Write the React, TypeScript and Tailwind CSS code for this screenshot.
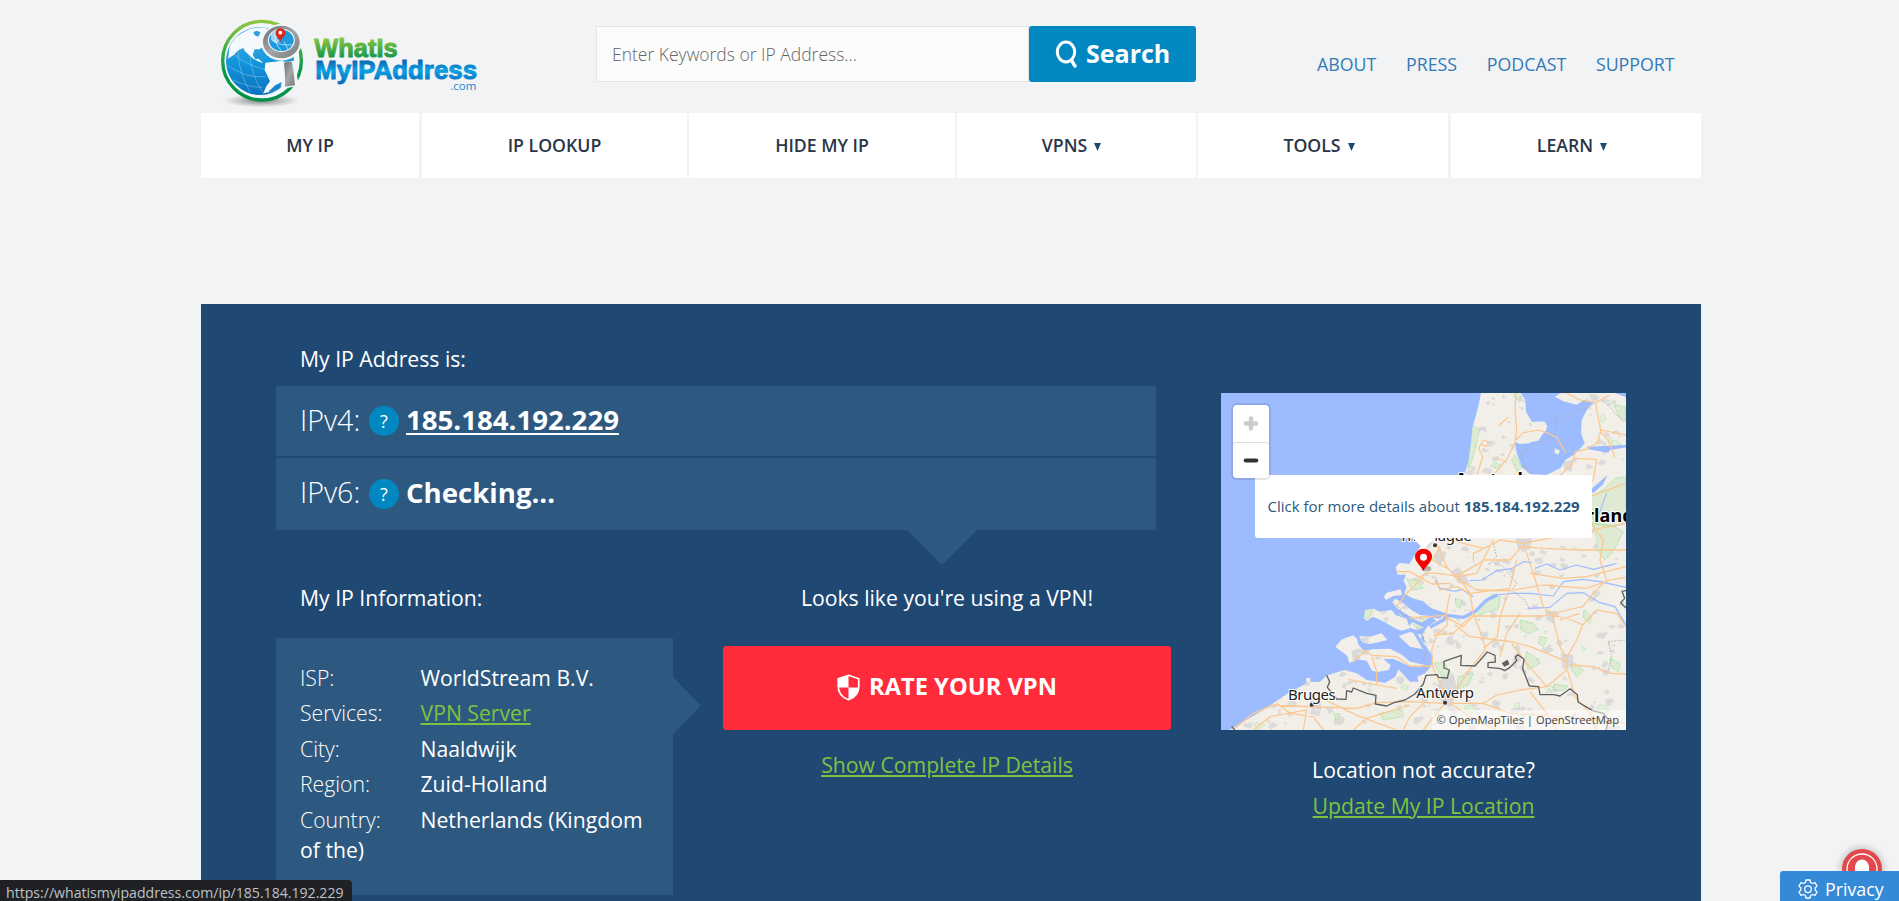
import React from "react";

const NAV = [
  { label: "MY IP", cls: "w-[218px] mr-[3px]" },
  { label: "IP LOOKUP", cls: "w-[265px] mr-[2px]" },
  { label: "HIDE MY IP", cls: "w-[266px] mr-[2px]" },
  { label: "VPNS", cls: "w-[239px] mr-[2px] pr-[10px]", menu: true },
  { label: "TOOLS", cls: "w-[250px] mr-[3px] pr-[8px]", menu: true },
  { label: "LEARN", cls: "w-[250px] pr-[8px]", menu: true },
];

const INFO = [
  { k: "ISP:", v: "WorldStream B.V." },
  { k: "Services:", v: "VPN Server", link: true },
  { k: "City:", v: "Naaldwijk" },
  { k: "Region:", v: "Zuid-Holland" },
  { k: "Country:", v: "Netherlands (Kingdom of the)" },
];

function Logo() {
  return (
    <svg className="h-[93px] w-[260px] shrink-0" viewBox="60 51 780 279">
      <defs>
        <linearGradient id="ring" x1="0" y1="0" x2="0" y2="1">
          <stop offset="0" stopColor="#8cc63f" />
          <stop offset="0.6" stopColor="#0a9a48" />
          <stop offset="1" stopColor="#009245" />
        </linearGradient>
        <linearGradient id="sea" x1="0" y1="0" x2="0" y2="1">
          <stop offset="0" stopColor="#5db4ea" />
          <stop offset="0.5" stopColor="#1397dd" />
          <stop offset="1" stopColor="#0a72bd" />
        </linearGradient>
        <linearGradient id="gtext" x1="0" y1="0" x2="0" y2="1">
          <stop offset="0.15" stopColor="#8cc63f" />
          <stop offset="0.85" stopColor="#0f9347" />
        </linearGradient>
        <linearGradient id="btext" x1="0" y1="0" x2="0" y2="1">
          <stop offset="0.15" stopColor="#0c62b0" />
          <stop offset="0.5" stopColor="#0aa0e4" />
          <stop offset="0.9" stopColor="#0a6fbf" />
        </linearGradient>
        <linearGradient id="steel" x1="0" y1="0" x2="1" y2="1">
          <stop offset="0" stopColor="#6c6e70" />
          <stop offset="0.5" stopColor="#a5a6a8" />
          <stop offset="1" stopColor="#77797b" />
        </linearGradient>
        <radialGradient id="shade">
          <stop offset="0" stopColor="#555" stopOpacity="0.75" />
          <stop offset="1" stopColor="#777" stopOpacity="0" />
        </radialGradient>
        <clipPath id="globe"><circle cx="180" cy="183" r="101" /></clipPath>
        <clipPath id="lens"><ellipse cx="244" cy="121" rx="37" ry="32" /></clipPath>
      </defs>
      <ellipse cx="184" cy="302" rx="115" ry="20" fill="url(#shade)" />
      <circle cx="186" cy="182" r="118" fill="#f3f7fa" stroke="url(#ring)" strokeWidth="10" />
      <circle cx="180" cy="183" r="102" fill="url(#sea)" />
      <g clipPath="url(#globe)">
        <path d="M90 130 L110 108 L150 86 L200 80 L200 108 L190 140 L178 148 L164 148 L158 164 L166 178 L176 176 L190 190 L174 184 L160 176 L146 164 L134 152 L130 144 L116 150 L100 166 L84 176 Z" fill="#f6f9fb" />
        <path d="M160 96 L172 92 L182 98 L174 110 L164 106 Z M166 152 L180 156 L186 166 L174 162 Z" fill="#2f9fe0" />
        <path d="M196 188 L250 182 L252 284 L210 276 L190 280 L198 260 L210 244 L194 210 Z" fill="#f6f9fb" />
        <path d="M206 274 L226 256 L245 246 L240 270 L214 282 Z" fill="#1b86d0" />
        <g fill="none" stroke="#cfe8f8" strokeWidth="1.5" opacity="0.7">
          <path d="M82 196 Q140 236 196 230 M100 240 Q140 262 188 262 M120 110 Q100 190 150 276 M150 160 Q150 220 190 280" />
          <path d="M92 150 Q120 190 200 210" />
        </g>
      </g>
      <ellipse cx="244" cy="127" rx="61" ry="55" fill="#f3f7fa" />
      <ellipse cx="244" cy="126" rx="55" ry="49" fill="url(#steel)" />
      <ellipse cx="244" cy="121" rx="40" ry="35" fill="#fff" />
      <ellipse cx="244" cy="121" rx="37" ry="32" fill="#1b9ae0" />
      <g clipPath="url(#lens)">
        <path d="M212 100 L228 92 L238 102 L230 114 L240 124 L226 130 L214 120 Z" fill="#9fd3f3" />
        <path d="M214 118 Q240 140 280 134 M224 94 Q222 130 244 152 M252 124 Q262 140 264 152" fill="none" stroke="#e6f4fc" strokeWidth="2" />
      </g>
      <path d="M241 126 C237 112 226 110 227 99 A14.500 14.500 0 0 1 256 99 C256 110 245 112 241 126 Z" fill="#d8291c" />
      <circle cx="241" cy="98" r="5.500" fill="#fff" />
      <path d="M246 186 L284 182 L296 258 L246 266 Z" fill="#f3f7fa" />
      <path d="M252 190 Q264 180 276 186 Q282 220 285 256 L255 260 Q256 220 252 190 Z" fill="url(#steel)" />
      <text x="343" y="172" fill="url(#gtext)" stroke="url(#gtext)" strokeWidth="3" strokeLinejoin="round" textLength="250" lengthAdjust="spacingAndGlyphs" className="font-['Liberation_Sans',sans-serif] text-[78px] font-bold">WhatIs</text>
      <text x="346" y="238" fill="url(#btext)" stroke="url(#btext)" strokeWidth="3" strokeLinejoin="round" textLength="485" lengthAdjust="spacingAndGlyphs" className="font-['Liberation_Sans',sans-serif] text-[78px] font-bold">MyIPAddress</text>
      <text x="751" y="269" fill="#1a86cc" textLength="78" lengthAdjust="spacingAndGlyphs" className="font-['Open_Sans',sans-serif] text-[35px]">.com</text>
    </svg>
  );
}

function patches(count: number, seed: number, size: number) {
  let s = seed;
  const rnd = () => {
    s = (s * 1103515245 + 12345) % 2147483648;
    return s / 2147483648;
  };
  const out: string[] = [];
  for (let i = 0; i < count; i++) {
    const x = 40 + rnd() * 1200;
    const y = 45 + rnd() * 1000;
    const n = 7;
    const r = size * (0.4 + rnd());
    let d = "";
    for (let j = 0; j < n; j++) {
      const a = (j / n) * Math.PI * 2;
      const q = r * (0.4 + rnd() * 0.9);
      d += `${j ? "L" : "M"}${(x + Math.cos(a) * q).toFixed(1)} ${(y + Math.sin(a) * q * 0.8).toFixed(1)}`;
    }
    out.push(d + "Z");
  }
  return out.join("");
}

const LAND =
  "M813 39 L806 75 L798 105 L788 140 L782 200 L774 250 L760 290 L735 350 L700 410 L655 465 L620 515 L598 552 L568 549 L557 562 L563 584 L588 584 L581 602 L590 622 L583 640 L606 655 L640 664 L668 690 L705 700 L690 716 L660 712 L630 730 L650 742 L632 775 L645 795 L668 828 L664 858 L645 880 L622 890 L625 905 L600 905 L565 868 L556 890 L525 908 L470 900 L440 880 L404 870 L352 886 L330 905 L302 906 L300 893 L288 895 L290 910 L230 942 L160 990 L75 1040 L58 1050 L1248 1050 L1248 39 Z" +
  "M522 650 L530 638 L572 628 L576 645 L550 648 L528 660 Z" +
  "M460 715 L466 690 L490 686 L510 695 L545 690 L556 705 L590 716 L600 745 L575 752 L556 745 L540 736 L516 722 L490 710 L470 722 Z" +
  "M545 668 L556 656 L584 672 L604 690 L630 705 L660 708 L680 722 L655 738 L618 750 L596 742 L612 718 L570 706 L562 692 Z" +
  "M376 800 L396 778 L430 766 L440 775 L446 796 L462 812 L490 808 L540 806 L575 824 L600 845 L645 855 L625 862 L590 855 L550 836 L520 838 L542 855 L536 870 L502 876 L486 872 L470 842 L440 838 L418 850 L412 828 Z" +
  "M448 768 L480 770 L515 760 L532 780 L500 788 L476 792 L456 786 Z" +
  "M566 768 L600 756 L640 765 L644 785 L640 808 L600 800 Z";

const INLAND_WATER =
  "M932 39 L946 60 L948 95 L965 125 L1000 125 L1010 150 L985 170 L958 190 L930 192 L915 186 L920 220 L936 262 L960 282 L1010 285 L1052 264 L1066 240 L1090 225 L1112 205 L1124 190 L1113 160 L1115 120 L1135 82 L1152 70 L1122 60 L1100 74 L1060 64 L1034 50 L1052 39 Z" +
  "M1130 200 L1248 195 L1248 202 L1200 210 L1195 218 L1135 208 Z M1140 330 L1192 286 L1180 312 L1150 340 Z M1215 39 L1248 39 L1248 52 Z";

const GREEN =
  "M788 136 L808 150 L800 190 L786 240 L774 268 L780 200 Z M905 240 L915 226 L935 262 L922 275 Z M842 258 L855 246 L872 256 L860 266 Z M1140 350 L1180 330 L1215 295 L1248 290 L1248 430 L1210 440 L1150 430 Z M1146 430 L1215 440 L1240 455 L1210 515 L1185 540 L1162 510 L1160 475 Z M1212 75 L1245 80 L1248 125 L1228 112 Z M820 665 L845 645 L872 650 L864 690 L830 696 L800 710 Z M930 720 L970 730 L985 748 L955 762 L932 748 Z M1122 690 L1145 710 L1138 730 L1118 712 Z M950 815 L972 830 L990 850 L955 868 L945 845 Z M735 655 L755 660 L750 686 L738 675 Z M990 770 L1012 775 L1000 800 L985 788 Z M1090 846 L1120 870 L1100 890 L1082 868 Z M1200 835 L1230 850 L1225 875 L1204 862 Z M672 850 L700 845 L722 880 L695 890 Z M745 890 L790 880 L775 915 L740 930 Z M1034 912 L1075 918 L1060 932 L1030 928 Z M510 1000 L575 988 L580 1010 L520 1020 Z M372 1000 L390 1002 L378 1025 Z M462 690 L490 685 L480 712 L462 718 Z M600 720 L640 735 L625 750 Z M1030 205 L1048 210 L1042 224 Z M590 596 L620 602 L640 625 L606 630 Z";

const ROADS =
  "M918 39 L915 90 L920 150 L916 185 L892 235 L862 272 L845 290 M800 290 L818 230 L806 205 L820 180 L836 186 L828 200 L812 192 M918 180 L940 158 L985 150 L1010 158 L1040 172 L1068 220 M1070 39 L1110 60 L1156 68 L1172 150 L1165 185 L1130 208 L1096 215 L1088 250 L1055 282 L1020 310 M1156 68 L1200 45 M1172 155 L1195 182 L1215 232 M1172 150 L1248 165 M1095 235 L1160 238 L1150 300 L1120 320 M1140 350 L1248 310" +
  "M680 490 L710 560 L735 590 L790 560 L822 540 L900 540 L935 500 L1000 505 L1110 510 L1248 510 M700 470 L760 490 L822 505 L870 480 L940 490 L1248 430 M822 505 L790 520 L790 545 M850 480 L800 580 L745 590 L700 582 L650 578 L630 592 L600 575 L560 575 M940 490 L970 580 L1000 680 L1026 705 L1050 800 L1072 840 M920 540 L900 620 L870 712 L862 770 L825 802 M745 590 L780 640 L790 700 L820 780 L825 810 L770 880 L720 960 M740 595 L800 630 L900 632 L1000 615 L1130 625 L1200 600 L1248 592 M680 600 L690 630 L740 620 L780 640 L900 625 M720 640 L708 700 L712 735 L680 765 L665 810 L668 860 L700 930 L708 960 M630 592 L665 612 L720 610 M640 590 L585 645 L560 680 M600 714 L708 706 M708 712 L760 740 L790 708 L1000 708 L1072 690 L1118 680 L1150 640 L1190 600 L1170 540 L1180 480 L1145 430 M670 765 L730 760 L790 700 M735 735 L780 770 L862 780 L905 785 L960 800 L1072 845 L1070 870 L1010 920 L930 930 L860 945 L820 970 L720 970 M1072 830 L1100 780 L1118 735 L1085 720 L1026 705 M1080 855 L1150 860 L1200 880 L1248 882 M1072 870 L1095 950 L1140 1000 L1160 1050 M430 846 L465 812 L485 826 L560 830 L600 858 L665 858 M486 830 L500 875 L500 915 M75 1045 L130 1000 L190 975 L300 980 L440 985 L500 968 L600 965 L700 970 M130 1050 L180 1010 L290 990 L280 1050 M200 970 L240 1000 L310 1010 L340 1050 M430 1050 L470 1015 L600 975 M345 960 L450 1010 L560 1050 M640 970 L600 1010 L580 1050 M700 975 L640 1050 M720 970 L780 1010 L860 1050 M960 935 L1010 1000 L1040 1050 M820 970 L900 1000 L1060 1010 L1248 1030 M1118 735 L1160 690 L1220 700 L1248 740 M960 580 L1060 595 L1130 590 L1248 560 M415 898 L500 915 L560 925 M690 500 L668 540 L720 570 M930 700 L890 760 L870 830 M905 790 L950 850 L1010 920 M1050 720 L1110 700 M865 138 L895 112 M858 234 L890 246";

const RIVERS =
  "M780 602 L815 600 L860 572 L905 566 L940 545 L965 548 M975 565 L1010 552 L1050 570 L1100 555 L1150 568 L1220 550 M675 600 L690 625 L735 634 L755 628 L790 650 M860 645 L905 640 L960 640 L1030 648 L1060 605 L1120 598 L1170 605 L1248 622 M952 685 L1020 682 L1070 640 L1120 638 L1170 668 L1215 680 L1248 735 M1190 340 L1160 420";

function MapView() {
  return (
    <div className="relative h-[337px] w-[405px] overflow-hidden bg-[#9dbcff]">
      <svg className="block h-[337px] w-[405px]" viewBox="33 39 1215 1011">
        <defs>
          <clipPath id="land"><path d={LAND} /></clipPath>
        </defs>
        <path d={LAND} fill="#f2efe9" />
        <g clipPath="url(#land)">
          <path d={patches(560, 77, 11)} fill="#dddbd9" />
          <path d={patches(36, 991, 12)} fill="#e3efda" stroke="#9be0a0" strokeWidth="2" strokeDasharray="4 3" />
          <path d={GREEN} fill="#dfead3" stroke="#8be092" strokeWidth="2.500" strokeDasharray="4 3" />
          <path d="M722 575 L745 560 L768 590 L780 612 L745 610 Z M1052 820 L1090 825 L1088 860 L1058 868 Z M690 900 L730 880 L745 940 L720 985 L690 960 L660 950 Z M915 475 L965 478 L960 510 L925 508 Z M1060 245 L1090 240 L1085 275 L1062 270 Z M300 965 L330 950 L335 990 L300 985 Z M424 812 L445 806 L450 840 L430 840 Z M1005 690 L1040 695 L1030 730 L1010 720 Z M690 500 L705 530 L690 560 L670 530 Z" fill="#dad8d8" />
        </g>
        <path d={INLAND_WATER} fill="#9dbcff" />
        <path d="M1005 125 L985 125 L975 130 L945 155 L940 190 L985 182 L1000 160 L1012 140 Z M1034 205 L1050 212 L1044 224 L1034 218 Z" fill="#f2efe9" />
        <path d="M576 645 L620 665 L665 690 L710 706 L760 712 L795 695 L830 660 L862 645 M532 660 L560 690 L600 716 L650 742 M660 742 L700 720 L710 706 M606 660 L640 680 M440 850 L500 900 L560 870 M640 880 L662 830 L640 800 L610 750" fill="none" stroke="#9dbcff" strokeWidth="10" strokeLinejoin="round" />
        <path d={RIVERS} fill="none" stroke="#9dbcff" strokeWidth="3.500" strokeLinejoin="round" />
        <g fill="none" stroke="#a9a9b3" strokeWidth="2.500" strokeDasharray="5 4">
          <path d="M985 39 L1010 80 L1040 115 L1135 82 M1040 115 L1035 165 L930 218 L945 260 L970 284 M1175 60 L1200 80 L1215 100 L1240 125 M850 490 L860 530 L845 545 L880 560 L920 610 L905 630 L945 660 L960 690 M520 680 L545 665 L570 685 L575 705 L640 718 M620 742 L650 790 L640 850 M1195 785 L1205 830 L1195 870 M1195 785 L1248 780" />
        </g>
        <path d={ROADS} fill="none" stroke="#fcc78f" strokeWidth="3.800" strokeLinejoin="round" />
        <g fill="none" stroke="#606060" strokeWidth="4" strokeLinejoin="round">
          <path d="M350 886 L359 905 L352 922 L365 938 L380 957 L408 958 L410 932 L425 936 L430 924 L470 940 L498 946 L496 972 L530 978 L552 968 L585 960 L615 942 L640 912 L648 886 L682 884 L685 892 L712 894 L718 870 L702 864 L702 844 L754 826 L752 856 L795 858 L832 816 L855 826 L856 846 L834 848 L834 862 L872 866 L884 872 L900 862 L920 842 L916 830 L924 824 L942 838 L938 866 L958 918 L986 920 L990 944 L1032 944 L1050 948 L1080 926 L1102 944 L1104 966 L1148 992 L1180 1000 L1196 1020 L1188 1050 M65 1040 L75 1050 M1248 632 L1236 634 L1244 655 L1232 668 L1248 684" />
          <path d="M878 850 L892 842 L896 852 L884 858 Z" fill="#606060" />
        </g>
        <g fill="#363636">
          <circle cx="675" cy="496" r="6" /><circle cx="705" cy="968" r="6" /><circle cx="305" cy="974" r="6" />
        </g>
        <g fill="#222" stroke="#fff" strokeWidth="6" paintOrder="stroke" strokeLinejoin="round" className="font-['Noto_Sans',sans-serif]">
          <text x="234" y="959" textLength="143" className="text-[45px]">Bruges</text>
          <text x="619" y="955" textLength="173" className="text-[45px]">Antwerp</text>
          <text x="568" y="484" textLength="217" className="text-[45px]">The Hague</text>
          <text x="735" y="317" textLength="280" className="text-[54px] font-bold" fill="#000">Amsterdam</text>
          <text x="960" y="427" textLength="338" className="text-[54px] font-bold" fill="#000">Netherlands</text>
        </g>
        <ellipse cx="650" cy="566" rx="14" ry="8" fill="#555" opacity="0.4" />
        <path d="M640 573 C634 558 615 546 615 530 A25.500 24 0 0 1 666 530 C666 546 647 558 640 573 Z" fill="#f70000" />
        <circle cx="640.500" cy="532" r="10.500" fill="#fff" />
        <path d="M606 472 L676 472 L641 507 Z" fill="#fff" />
      </svg>
      <div className="absolute left-[34px] top-[82px] flex h-[62.500px] w-[337px] items-center justify-center rounded-[3px] bg-white text-[15px] whitespace-nowrap text-[#2c5981]">
        <span>Click for more details about <b>185.184.192.229</b></span>
      </div>
      <div className="absolute left-[12px] top-[12px] flex h-[73px] w-[36px] flex-col overflow-hidden rounded-[4px] bg-white shadow-[0_0_0_2px_rgba(0,0,0,0.1)]">
        <svg className="block" width="36" height="73" viewBox="0 0 36 73" fill="none" strokeLinecap="round">
          <path d="M18 13.500 V23.500 M13 18.500 H23" stroke="#ccc" strokeWidth="4.500" />
          <path d="M0 39.500 Q0 37.500 3 37.500 H33 Q36 37.500 36 39.500" stroke="#ddd" strokeWidth="1" />
          <path d="M12.700 55.500 H23.300" stroke="#333" strokeWidth="4" />
        </svg>
      </div>
      <div className="absolute bottom-0 right-0 flex h-[20px] items-center bg-white/50 pr-[7px] pl-[5px] text-[11.200px] whitespace-nowrap text-[#404040]">
        © OpenMapTiles | OpenStreetMap
      </div>
    </div>
  );
}

function HelpDot() {
  return (
    <span className="ml-[8px] mr-[7px] flex h-[30px] w-[30px] items-center justify-center rounded-full bg-[#0288c0] text-[18px] font-normal">?</span>
  );
}

export default function App() {
  return (
    <div className="relative h-[901px] w-[1899px] overflow-hidden bg-[#f1f3f5] font-['Open_Sans',sans-serif]">
      <div className="ml-[201px] flex h-[901px] w-[1500px] flex-col">
        <header className="flex h-[113px] shrink-0 items-start">
          <div className="ml-[19px] mt-[17px] w-[376px]"><Logo /></div>
          <div className="mt-[26px] flex h-[56px] w-[600px]">
            <div className="flex w-[433px] items-center border border-[#e3e4e5] bg-[#fcfcfc] pl-[15px] text-[17.500px] font-light text-[#666]">Enter Keywords or IP Address...</div>
            <button className="flex w-[167px] items-center rounded-[3px] bg-[#0288c0] pl-[26px] text-[25px] font-bold text-white">
              <svg className="mr-[8px]" width="23" height="28" viewBox="0 0 23 28" fill="none" stroke="#fff" strokeLinecap="round">
                <ellipse cx="11" cy="12" rx="8.700" ry="10" strokeWidth="3" />
                <path d="M16.500 20.500 L20 26" strokeWidth="3.400" />
              </svg>
              Search
            </button>
          </div>
          <nav className="mt-[51px] ml-[121px] flex gap-[29.700px] text-[17.800px] leading-[26px] font-medium whitespace-nowrap text-[#337ab7]">
            <a>ABOUT</a><a>PRESS</a><a>PODCAST</a><a>SUPPORT</a>
          </nav>
        </header>
        <nav className="flex h-[65px] shrink-0 text-[17.700px] font-[650] text-[#2a3547]">
          {NAV.map((n) => (
            <a key={n.label} className={`flex shrink-0 items-center justify-center bg-white ${n.cls}`}>
              {n.label}
              {n.menu && (
                <svg className="mt-[2px] ml-[7px]" width="7" height="8" viewBox="0 0 7 8"><path d="M0 0 H7 L3.500 8 Z" fill="#1f4973" /></svg>
              )}
            </a>
          ))}
        </nav>
        <main className="mt-[126px] flex h-[597px] shrink-0 items-start bg-[#1f4973] pl-[75px] text-[21.200px] text-white">
          <section className="w-[895px]">
            <h2 className="mt-[40px] pl-[24px] leading-[30px]">My IP Address is:</h2>
            <div className="relative mt-[12px] flex w-[880px] flex-col gap-[2px]">
              <div className="flex h-[70px] items-center bg-[#2d5980] pl-[24px] text-[28.600px] font-light">
                <span className="w-[61px] -mt-[2px]">IPv4:</span><HelpDot />
                <b className="-mt-[2px] text-[27.600px] font-bold underline decoration-2 underline-offset-[3px]">185.184.192.229</b>
              </div>
              <div className="flex h-[72px] items-center bg-[#2d5980] pl-[24px] text-[28.600px] font-light">
                <span className="w-[61px] -mt-[3px]">IPv6:</span><HelpDot />
                <b className="-mt-[3px] text-[27.600px] font-bold">Checking...</b>
              </div>
              <svg className="absolute top-[144px] left-[631px]" width="70" height="35" viewBox="0 0 70 35"><path d="M0 0 H70 L35 35 Z" fill="#2d5980" /></svg>
            </div>
            <div className="flex">
              <div className="w-[397px]">
                <h2 className="mt-[53px] pl-[24px] leading-[30px]">My IP Information:</h2>
                <div className="relative mt-[25px] flex h-[257px] flex-col gap-[5.400px] bg-[#2d5980] pt-[25px] pl-[24px] pr-[20px]">
                  {INFO.map((i) => (
                    <p key={i.k} className="leading-[30px]">
                      <span className="inline-block w-[120.500px] font-light">{i.k}</span>
                      <span className={i.link ? "text-[#7fc241] underline decoration-2 underline-offset-[2px]" : ""}>{i.v}</span>
                    </p>
                  ))}
                  <svg className="absolute top-[39px] left-[397px]" width="28" height="57" viewBox="0 0 28 57"><path d="M0 0 L28 28.500 L0 57 Z" fill="#2d5980" /></svg>
                </div>
              </div>
              <div className="ml-[50px] flex w-[448px] flex-col items-center">
                <h2 className="mt-[53px] leading-[30px]">Looks like you're using a VPN!</h2>
                <button className="mt-[33px] flex h-[84px] w-[448px] items-center justify-center rounded-[3px] bg-[#ff2a3a] pb-[2px] text-[23.700px] font-bold">
                  <svg className="mr-[9px]" width="23" height="27" viewBox="0 0 23 27">
                    <path d="M11.500 1.300 L21.800 4.800 V12 C21.800 19 18 23.500 11.500 25.800 C5 23.500 1.200 19 1.200 12 V4.800 Z" fill="none" stroke="#fff" strokeWidth="1.700" />
                    <path d="M11.500 1 V13.500 H1 V4.500 Z M11.500 13.500 H22 C21.500 19.500 18 23.500 11.500 26 Z" fill="#fff" />
                  </svg>
                  RATE YOUR VPN
                </button>
                <a className="mt-[20px] leading-[30px] text-[#7fc241] underline decoration-2 underline-offset-[2px]">Show Complete IP Details</a>
              </div>
            </div>
          </section>
          <aside className="ml-[50px] flex w-[405px] flex-col items-center pt-[89px]">
            <MapView />
            <p className="mt-[25px] leading-[30px]">Location not accurate?</p>
            <a className="mt-[5.500px] leading-[30px] text-[#7fc241] underline decoration-2 underline-offset-[2px]">Update My IP Location</a>
          </aside>
        </main>
      </div>
      <div className="absolute left-[1842px] top-[849px] h-[40px] w-[40px] rounded-full bg-[#e5484c] shadow-[0_0_8px_rgba(0,0,0,0.3)]">
        <svg width="40" height="40" viewBox="0 0 40 40">
          <circle cx="20" cy="20" r="15" fill="none" stroke="#fff" strokeWidth="1.300" />
          <path d="M13 26 V18 A7 7.500 0 0 1 27 18 V26 Z" fill="#fff" />
        </svg>
      </div>
      <div className="absolute left-[1780px] top-[871px] flex h-[34px] w-[122px] rounded-[3px] bg-[#358ad7] pl-[18px] text-[17.800px] text-white">
        <svg className="mt-[8px] mr-[7px]" width="20" height="21" viewBox="0 0 20 21" fill="none" stroke="#fff" strokeWidth="1.300" strokeLinejoin="round">
          <path d="M8 1 h4 l.6 2.500 l1.800 1 l2.600-.9 l2 3.400 l-1.800 1.900 v2.200 l1.800 1.900 l-2 3.400 l-2.600-.9 l-1.800 1 l-.6 2.500 h-4 l-.6-2.500 l-1.800-1 l-2.600 .9 l-2-3.400 l1.800-1.900 v-2.200 l-1.800-1.900 l2-3.400 l2.600 .9 l1.800-1 Z" />
          <circle cx="10" cy="10.200" r="3.300" />
        </svg>
        <span className="mt-[4px] leading-[28px]">Privacy</span>
      </div>
      <div className="absolute left-0 top-[880px] h-[25px] w-[352px] rounded-tr-[4px] bg-[#202124] pl-[6px] text-[14.100px] leading-[26px] whitespace-nowrap text-[#bdc1c6]">https://whatismyipaddress.com/ip/185.184.192.229</div>
    </div>
  );
}
